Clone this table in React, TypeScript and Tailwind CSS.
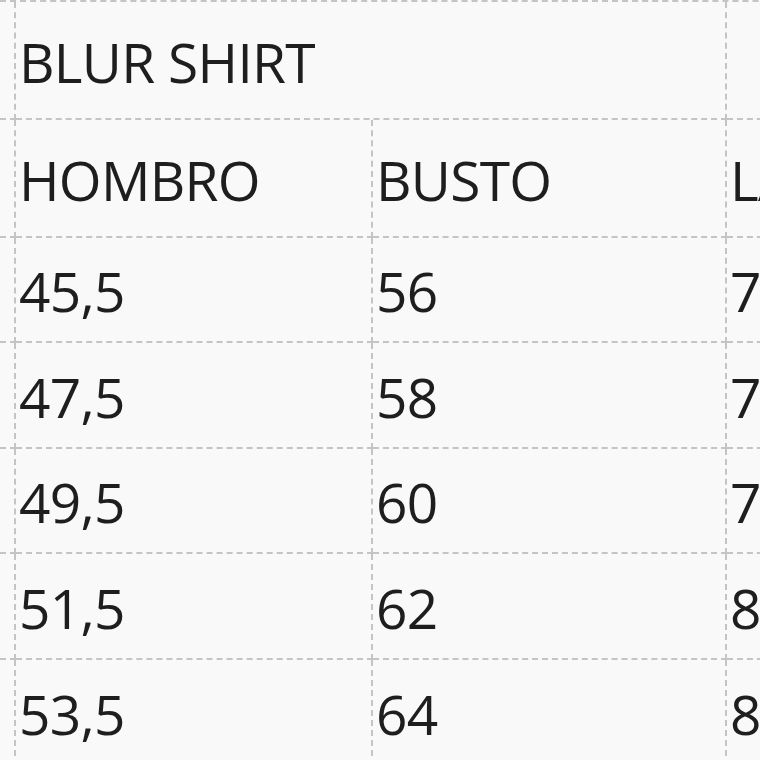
import React from 'react';

const rows: string[][] = [
  ['HOMBRO', 'BUSTO', 'LARGO'],
  ['45,5', '56', '74'],
  ['47,5', '58', '76'],
  ['49,5', '60', '78'],
  ['51,5', '62', '80'],
  ['53,5', '64', '82'],
];

const rowHeights = ['h-[118px]', 'h-[105px]', 'h-[106px]', 'h-[105px]', 'h-[106px]', 'h-[106px]'];

const line = 'border-dashed border-[#c4c4c4]';

const Cell: React.FC<{ children?: React.ReactNode; className?: string }> = ({ children, className = '' }) => (
  <div className={`flex items-center pl-[3px] pt-[2px] border-r-2 border-b-2 ${line} ${className}`}>
    <span className="whitespace-nowrap">{children}</span>
  </div>
);

export default function App() {
  return (
    <div
      className="w-[760px] h-[760px] overflow-hidden bg-[#f9f9f9] text-[#1e1e1e] text-[55px] tracking-[-0.7px] leading-none"
      style={{ fontFamily: '"Open Sans", "Noto Sans", sans-serif' }}
    >
      <div className={`flex w-[1200px] border-t-2 ${line}`}>
        <div className={`w-[16px] h-[118px] border-r-2 border-b-2 ${line}`} />
        <Cell className="w-[711px] h-[118px]">BLUR SHIRT</Cell>
        <Cell className="w-[354px] h-[118px]" />
      </div>
      {rows.map((r, i) => (
        <div key={i} className="flex w-[1200px]">
          <div className={`w-[16px] ${rowHeights[i]} border-r-2 border-b-2 ${line}`} />
          <Cell className={`w-[357px] ${rowHeights[i]}`}>{r[0]}</Cell>
          <Cell className={`w-[354px] ${rowHeights[i]}`}>{r[1]}</Cell>
          <Cell className={`w-[354px] ${rowHeights[i]}`}>{r[2]}</Cell>
        </div>
      ))}
    </div>
  );
}
